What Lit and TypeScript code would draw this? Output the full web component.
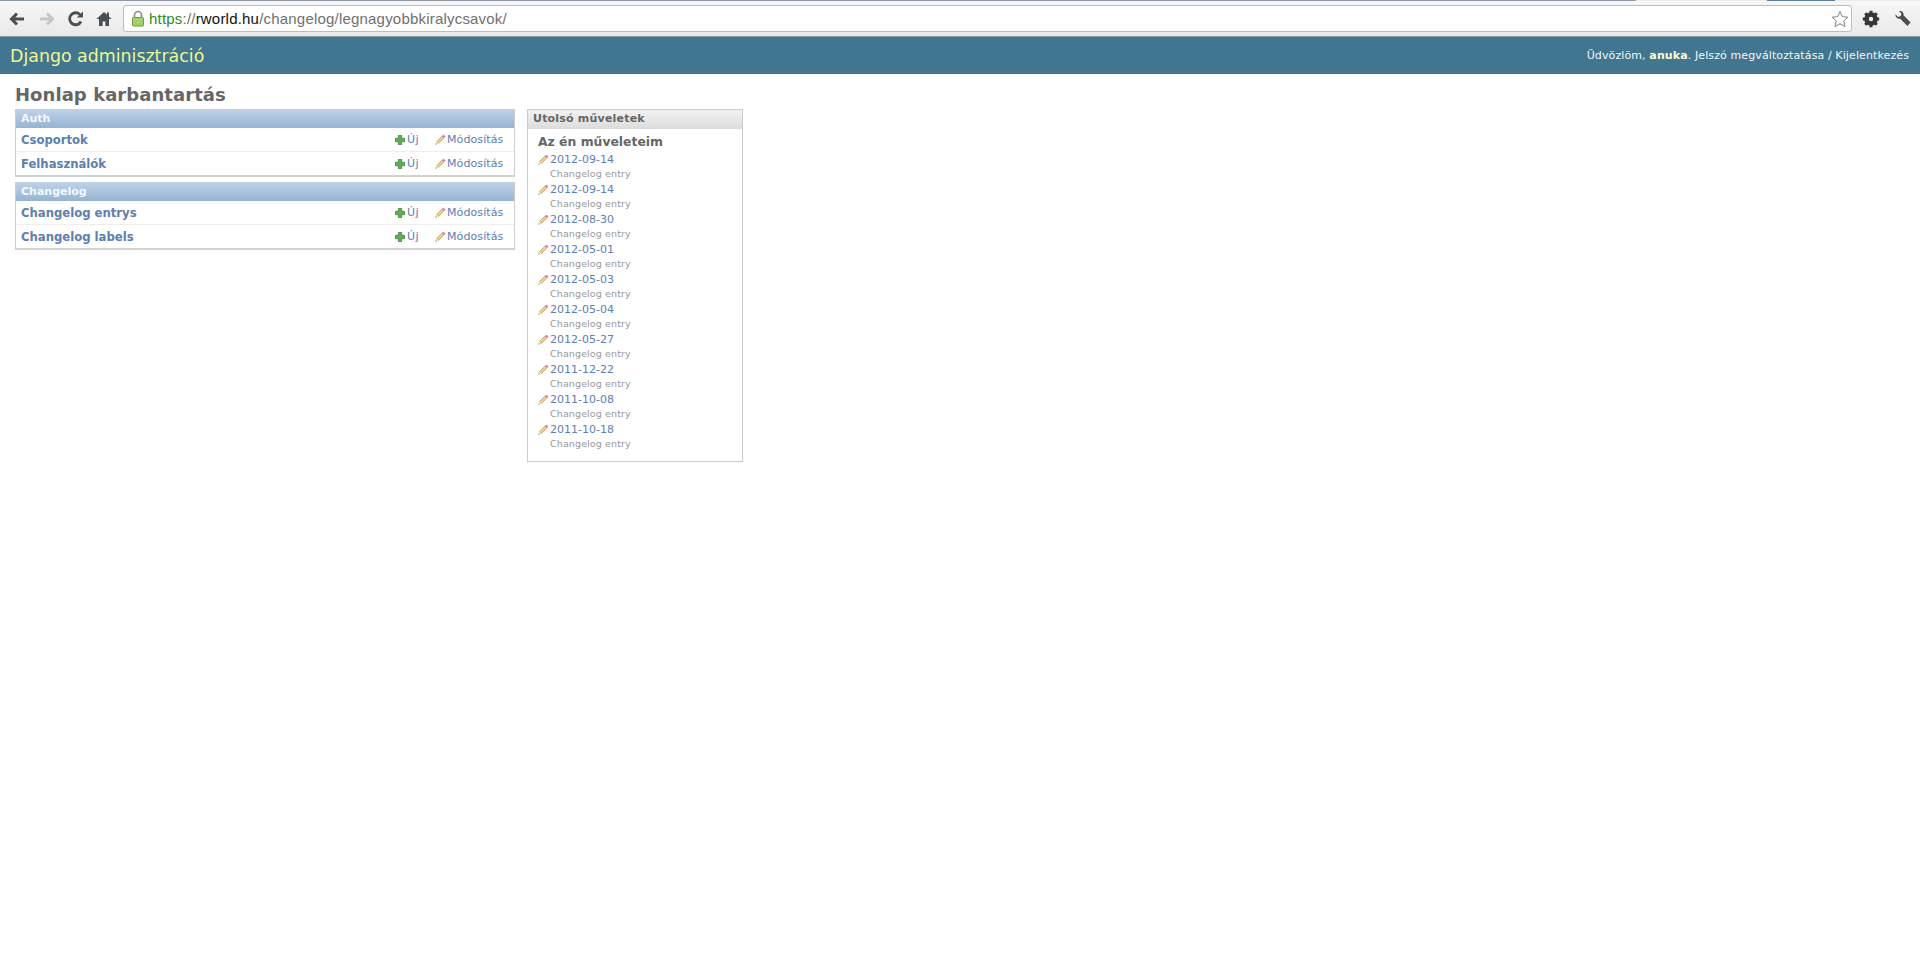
import { LitElement, html, css, svg } from "lit";
import { customElement } from "lit/decorators.js";

const pencil = svg`<svg class="ico" viewBox="0 0 12 12" width="11" height="11"><path d="M1.6 8.4 7.9 2.1 9.9 4.1 3.6 10.4Z" fill="#f3d27c" stroke="#a98a45" stroke-width=".7"/><path d="M7.7 2.3 9.3.7 11.3 2.7 9.7 4.3Z" fill="#e56cc4"/><path d="M1.6 8.4.6 11.4 3.6 10.4Z" fill="#f8e8c4"/><path d="M.6 11.4.9 10.2 1.8 11.1Z" fill="#222"/></svg>`;
const plus = svg`<svg class="ico" viewBox="0 0 10 10" width="10" height="10"><path d="M3.3.5H6.7V3.3H9.5V6.7H6.7V9.5H3.3V6.7H.5V3.3H3.3Z" fill="#5bb04f" stroke="#3f8a3a" stroke-width=".8"/></svg>`;

const entries = ["2012-09-14","2012-09-14","2012-08-30","2012-05-01","2012-05-03","2012-05-04","2012-05-27","2011-12-22","2011-10-08","2011-10-18"];
const modules = [
  { name: "Auth", rows: ["Csoportok", "Felhasználók"] },
  { name: "Changelog", rows: ["Changelog entrys", "Changelog labels"] },
];

@customElement("app-root")
export class AppRoot extends LitElement {
  static styles = css`
    :host { display: block; height: 964px; background: #fff; font-family: "DejaVu Sans", Verdana, sans-serif; overflow: hidden; color: #666; }
    .strip { height: 1px; background: linear-gradient(90deg, #8f99a6 0, #8f99a6 1636px, #e8edf2 1636px, #e8edf2 1767px, #5b7d9b 1767px, #5b7d9b 1835px, #e8edf2 1835px); }
    .chrome { height: 36px; box-sizing: border-box; display: flex; align-items: center; background: linear-gradient(#f7f7f7, #e9e9e9); padding: 0 8px 0 8px; border-bottom: 1px solid #8d9aa4; }
    .nav { display: flex; align-items: center; gap: 12px; width: 115px; flex: none; }
    .nav svg { display: block; flex: none; }
    .omni { flex: 1; height: 27px; box-sizing: border-box; background: #fff; border: 1px solid #bdbdbd; border-radius: 3px; display: flex; align-items: center; padding: 0 2px 0 7px; font-family: "Liberation Sans", Arial, sans-serif; font-size: 15px; color: #6f6f6f; letter-spacing: 0.2px; }
    .omni .lock { margin-right: 4px; display: block; }
    .g { color: #2c8a1f; } .k { color: #111; }
    .omni .star { margin-left: auto; display: block; }
    .tools { display: flex; align-items: center; gap: 14px; margin-left: 10px; flex: none; }
    .tools svg { display: block; }
    .header { height: 37px; box-sizing: border-box; background: #417690; display: flex; align-items: center; justify-content: space-between; padding: 0 11px 0 10px; color: #fff; }
    .brand { font-size: 17.4px; color: #f0f58c; }
    .user { font-size: 11px; letter-spacing: 0.11px; color: #f2f6f7; }
    .user b { color: #fffccc; }
    h1 { margin: 0; padding: 11px 0 0 15px; font-size: 18px; line-height: 20px; font-weight: bold; color: #666; letter-spacing: 0.06px; }
    .main { display: flex; align-items: flex-start; padding: 4px 0 0 15px; gap: 12px; }
    .left { width: 500px; display: flex; flex-direction: column; gap: 5px; }
    .mod { border: 1px solid #ccc; border-top: none; border-bottom: 2px solid #d2d2d2; }
    .cap { height: 19px; line-height: 19px; box-sizing: border-box; padding-left: 5px; font-size: 11px; font-weight: bold; color: #f4f7fa; background: linear-gradient(#bfd3e8, #94b4d4); }
    .row { height: 23px; display: flex; align-items: center; padding: 0 11px 0 5px; border-top: 1px solid #eee; }
    .cap + .row { border-top: none; }
    .row .name { font-size: 11.65px; font-weight: bold; color: #5b80b2; flex: 1; }
    .act { font-size: 11px; color: #5b80b2; display: flex; align-items: center; letter-spacing: 0.1px; }
    .act.add { width: 40px; gap: 2px; letter-spacing: 0.5px; }
    .act.chg { gap: 1px; width: 68px; }
    .act .ico { display: block; flex: none; }
    .side { width: 216px; box-sizing: border-box; border: 1px solid #ccc; height: 353px; }
    .side .cap2 { height: 19px; line-height: 17px; box-sizing: border-box; padding-left: 5px; font-size: 11px; font-weight: bold; color: #666; background: linear-gradient(#f2f2f2, #dcdcdc); letter-spacing: 0.2px; }
    .side h3 { margin: 0; padding: 5px 0 0 10px; font-size: 12.4px; line-height: 16px; font-weight: bold; color: #666; }
    .side ul { margin: 0; padding: 2px 0 0 10px; list-style: none; }
    .side li { height: 30px; }
    .date { display: flex; align-items: center; font-size: 11px; line-height: 15px; color: #5b80b2; }
    .date .ico { margin: -1px 1px 0 0; }
    .sub { font-size: 9.5px; line-height: 14px; padding-left: 12px; color: #999; letter-spacing: 0.12px; }
  `;

  render() {
    return html`
      <div class="strip"></div>
      <div class="chrome">
        <div class="nav">
          <svg width="18" height="16" viewBox="0 0 18 16"><path d="M16 8H4M9 2.5 3.5 8 9 13.5" fill="none" stroke="#4a4f53" stroke-width="3"/></svg>
          <svg width="18" height="16" viewBox="0 0 18 16"><path d="M2 8H14M9 2.5 14.5 8 9 13.5" fill="none" stroke="#c4c7c9" stroke-width="3"/></svg>
          <svg width="16" height="16" viewBox="0 0 16 16"><path d="M13 10.5A6 6 0 1 1 12 3.6" fill="none" stroke="#4a4f53" stroke-width="2.8"/><path d="M8.8 6.6H15V.6Z" fill="#4a4f53"/></svg>
          <svg width="16" height="16" viewBox="0 0 16 16"><path d="M8 1 .5 8H3v7h3.6v-4.6h2.8V15H13V8h2.5L13 5.6V1.5h-2v2.2Z" fill="#4a4f53"/></svg>
        </div>
        <div class="omni">
          <svg class="lock" width="14" height="17" viewBox="0 0 14 17"><path d="M3.5 8V5a3.5 3.5 0 0 1 7 0v3" fill="none" stroke="#8a8a8a" stroke-width="1.6"/><rect x="1.5" y="7.5" width="11" height="8.5" rx="1" fill="#a4d468" stroke="#6d9a3c"/></svg>
          <span><span class="g">https</span>://<span class="k">rworld.hu</span>/changelog/legnagyobbkiralycsavok/</span>
          <svg class="star" width="18" height="18" viewBox="0 0 18 18"><path d="M9 1.4 11.3 6.6 17 7.2 12.7 11 14 16.6 9 13.7 4 16.6 5.3 11 1 7.2 6.7 6.6Z" fill="#fff" stroke="#858585" stroke-width="1"/></svg>
        </div>
        <div class="tools">
          <svg width="18" height="18" viewBox="0 0 18 18"><circle cx="9" cy="9" r="5" fill="none" stroke="#33373a" stroke-width="3.6"/><path d="M9 .8V17.2M.8 9H17.2M3.2 3.2 14.8 14.8M14.8 3.2 3.2 14.8" stroke="#33373a" stroke-width="3"/><circle cx="9" cy="9" r="2.2" fill="#eee"/></svg>
          <svg width="18" height="18" viewBox="0 0 18 18"><path d="M1.5 4.5 4.2 7 6.8 6 7.4 3.4 5 1.2C7.5.2 10 2.2 9.6 5.2L16.6 12.6 13.4 16 6.2 8.8C3.4 9 1 7.2 1.5 4.5Z" fill="#4a4f53"/></svg>
        </div>
      </div>
      <div class="header">
        <span class="brand">Django adminisztráció</span>
        <span class="user">Üdvözlöm, <b>anuka</b>. Jelszó megváltoztatása / Kijelentkezés</span>
      </div>
      <h1>Honlap karbantartás</h1>
      <div class="main">
        <div class="left">
          ${modules.map((m) => html`
            <div class="mod">
              <div class="cap">${m.name}</div>
              ${m.rows.map((r) => html`
                <div class="row">
                  <span class="name">${r}</span>
                  <span class="act add">${plus}Új</span>
                  <span class="act chg">${pencil}Módosítás</span>
                </div>`)}
            </div>`)}
        </div>
        <div class="side">
          <div class="cap2">Utolsó műveletek</div>
          <h3>Az én műveleteim</h3>
          <ul>
            ${entries.map((e) => html`
              <li>
                <div class="date">${pencil}${e}</div>
                <div class="sub">Changelog entry</div>
              </li>`)}
          </ul>
        </div>
      </div>
    `;
  }
}
